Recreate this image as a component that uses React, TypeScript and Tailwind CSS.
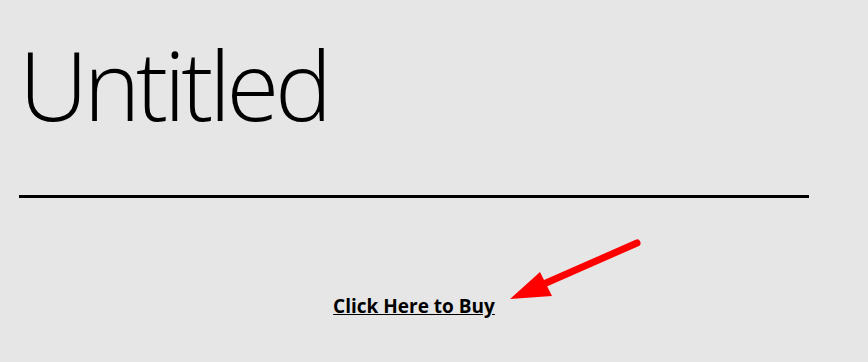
export default function App() {
  return (
    <div className="relative h-[362px] w-[868px] overflow-hidden bg-[#e6e6e6] font-['Open_Sans',sans-serif] text-black">
      <div className="ml-[19px] w-[790px] pt-[36px]">
        <h1 className="text-[96px] font-light leading-none tracking-[-4.3px]">
          Untitled
        </h1>
        <hr className="mt-[63px] border-t-[3px] border-black" />
        <div className="mt-[96px] flex justify-center">
          <a href="#" className="text-[19px] font-bold leading-6 underline">
            Click Here to Buy
          </a>
        </div>
      </div>

      {/* red arrow pointing at the buy link */}
      <svg
        className="pointer-events-none absolute left-0 top-0"
        width="868"
        height="362"
        viewBox="0 0 868 362"
      >
        <line
          x1="637"
          y1="243"
          x2="546"
          y2="283"
          stroke="#ff0000"
          strokeWidth="7"
          strokeLinecap="round"
        />
        <polygon points="510,299 540,272 552,296" fill="#ff0000" />
      </svg>
    </div>
  );
}
